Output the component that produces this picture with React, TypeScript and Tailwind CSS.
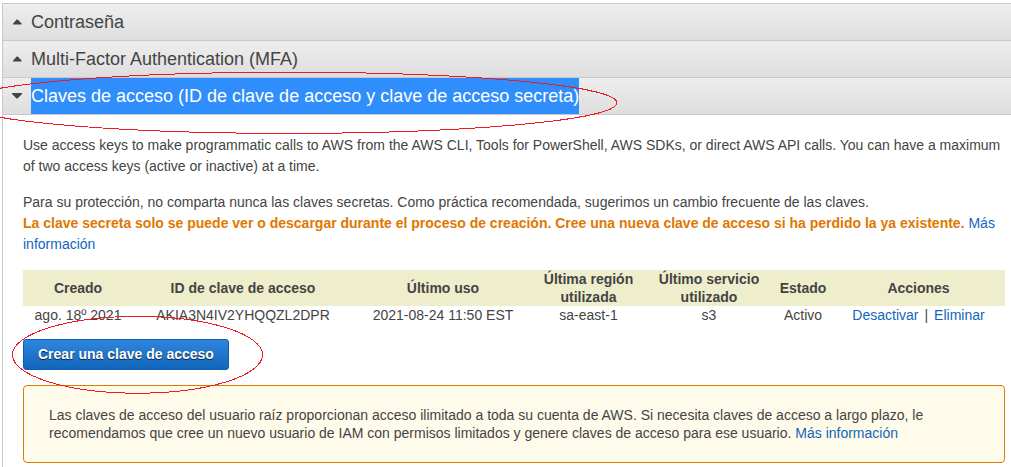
import React from "react";

function Caret({ open }: { open: boolean }) {
  return (
    <svg width="10" height="6" viewBox="0 0 10 6" className="shrink-0 fill-[#444444]" aria-hidden="true">
      <path d={open ? "M0 0H10V1L5.5 5.5H4.5L0 1Z" : "M1 5.5H9.5V4.5L5.8 0.5H4.8L1 4.5Z"} />
    </svg>
  );
}

function SectionHeader({ title, open = false, selected = false }: { title: string; open?: boolean; selected?: boolean }) {
  return (
    <h2 className="border-b border-[#c8c8c8] bg-linear-to-b from-[#eeeeee] to-[#dedede]">
      <button
        type="button"
        aria-expanded={open}
        className="flex h-9 w-full items-center gap-[9px] pl-[9px] text-left text-[18px] text-[#444444]"
      >
        <Caret open={open} />
        <span className={selected ? "bg-[#308efc] leading-9 text-white" : "leading-9"}>{title}</span>
      </button>
    </h2>
  );
}

function Link({ children }: { children: React.ReactNode }) {
  return (
    <a href="#" className="text-[#1166bb] hover:underline">
      {children}
    </a>
  );
}

function KeysTable() {
  return (
    <table className="mt-[15px] w-full table-fixed border-collapse text-center leading-[18px]">
      <colgroup>
        <col className="w-[110px]" />
        <col className="w-[220px]" />
        <col className="w-[180px]" />
        <col className="w-[111px]" />
        <col className="w-[130px]" />
        <col className="w-[58px]" />
        <col />
      </colgroup>
      <thead className="bg-[#eeeecc]">
        <tr>
          <th>Creado</th>
          <th>ID de clave de acceso</th>
          <th>Último uso</th>
          <th>Última región utilizada</th>
          <th>Último servicio utilizado</th>
          <th>Estado</th>
          <th>Acciones</th>
        </tr>
      </thead>
      <tbody>
        <tr>
          <td>ago. 18º 2021</td>
          <td>AKIA3N4IV2YHQQZL2DPR</td>
          <td>2021-08-24 11:50 EST</td>
          <td>sa-east-1</td>
          <td>s3</td>
          <td>Activo</td>
          <td>
            <span className="inline-flex gap-1.5">
              <Link>Desactivar</Link>
              <span>|</span>
              <Link>Eliminar</Link>
            </span>
          </td>
        </tr>
      </tbody>
    </table>
  );
}

function Markings() {
  return (
    <svg
      className="pointer-events-none absolute top-0 left-0 fill-none stroke-[#ed1c24]"
      width="640"
      height="400"
      shapeRendering="crispEdges"
      aria-hidden="true"
    >
      <ellipse cx="289" cy="102.8" rx="328" ry="30.6" />
      <ellipse cx="137.5" cy="354.8" rx="125" ry="38.4" />
    </svg>
  );
}

export default function App() {
  return (
    <div className="relative flex min-h-screen flex-col overflow-hidden bg-white pt-[3px] pl-0.5 font-['Liberation_Sans',Arial,sans-serif] text-[14px] text-[#444444]">
      <main className="flex-1 border-t border-l border-[#c8c8c8]">
        <SectionHeader title="Contraseña" />
        <SectionHeader title="Multi-Factor Authentication (MFA)" />
        <SectionHeader title="Claves de acceso (ID de clave de acceso y clave de acceso secreta)" open selected />
        <section className="pt-5 pr-1.5 pb-1 pl-5 leading-[21px]">
          <p>
            Use access keys to make programmatic calls to AWS from the AWS CLI, Tools for PowerShell, AWS SDKs, or
            direct AWS API calls. You can have a maximum of two access keys (active or inactive) at a time.
          </p>
          <p className="mt-[15px]">
            Para su protección, no comparta nunca las claves secretas. Como práctica recomendada, sugerimos un cambio
            frecuente de las claves.
            <br />
            <strong className="text-[#e07700]">
              La clave secreta solo se puede ver o descargar durante el proceso de creación. Cree una nueva clave de
              acceso si ha perdido la ya existente.
            </strong>{" "}
            <Link>Más información</Link>
          </p>
          <KeysTable />
          <button
            type="button"
            className="mt-[15px] block h-[31px] rounded-[3px] border border-[#0c5fb0] bg-linear-to-b from-[#2f86de] to-[#1166bb] px-3.5 font-bold text-white text-shadow-[0_1px_1px_rgb(0_0_0/0.7)]"
          >
            Crear una clave de acceso
          </button>
          <p className="mt-[15px] rounded-[4px] border border-[#dd7a00] bg-[#fffbea] py-5 pr-10 pl-[25px] leading-[18px]">
            Las claves de acceso del usuario raíz proporcionan acceso ilimitado a toda su cuenta de AWS. Si necesita
            claves de acceso a largo plazo, le recomendamos que cree un nuevo usuario de IAM con permisos limitados y
            genere claves de acceso para ese usuario. <Link>Más información</Link>
          </p>
        </section>
      </main>
      <Markings />
    </div>
  );
}
